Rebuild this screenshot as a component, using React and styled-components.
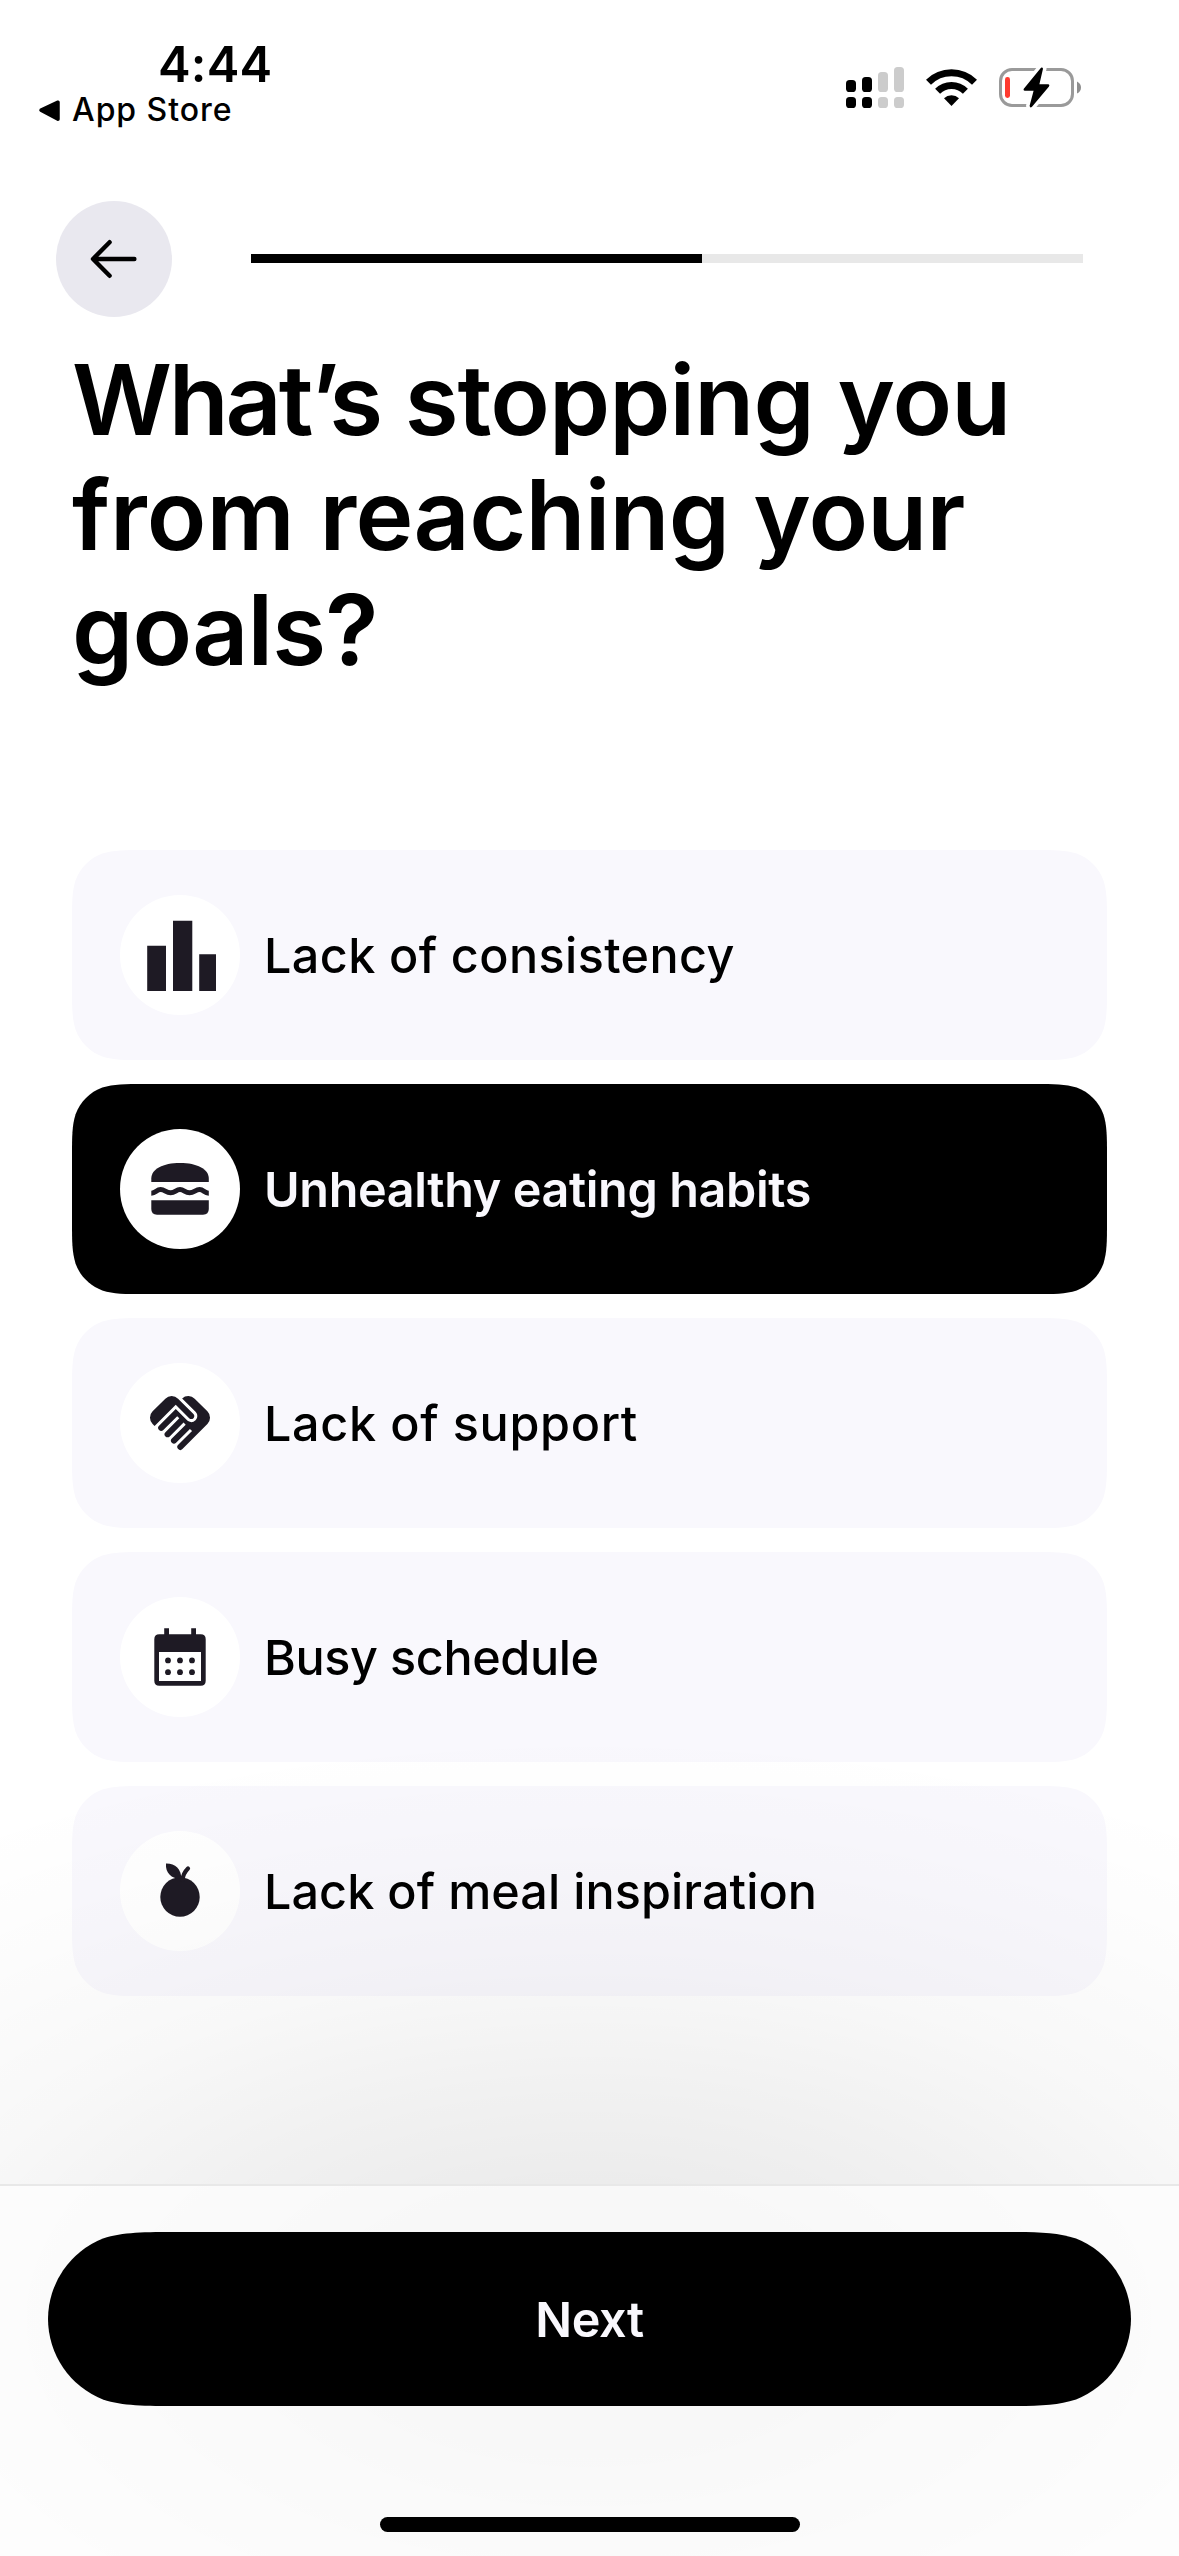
import React from "react";
import styled, { createGlobalStyle, css } from "styled-components";
import { MdHandshake } from "react-icons/md";

const INK = "#1e1a24";

const GlobalStyle = createGlobalStyle`
  *, *::before, *::after { box-sizing: border-box; }
  html, body { margin: 0; padding: 0; background: #fff; }
  body { font-family: Inter, Roboto, "Liberation Sans", sans-serif; color: #000; }
  button { font: inherit; border: 0; padding: 0; margin: 0; cursor: pointer; }
`;

/* Outline of a box whose corners ease gradually into its sides. */
const smoothBox = (w, h, r) => {
  const a = 1.528665 * r, b = 1.08849 * r, c = 0.868407 * r, d = 0.631494 * r;
  const e = 0.372824 * r, f = 0.16906 * r, g = 0.074911 * r;
  return `M${a} 0H${w - a}C${w - b} 0 ${w - c} 0 ${w - d} ${g}C${w - e} ${f} ${w - f} ${e} ${w - g} ${d}C${w} ${c} ${w} ${b} ${w} ${a}V${h - a}C${w} ${h - b} ${w} ${h - c} ${w - g} ${h - d}C${w - f} ${h - e} ${w - e} ${h - f} ${w - d} ${h - g}C${w - c} ${h} ${w - b} ${h} ${w - a} ${h}H${a}C${b} ${h} ${c} ${h} ${d} ${h - g}C${e} ${h - f} ${f} ${h - e} ${g} ${h - d}C0 ${h - c} 0 ${h - b} 0 ${h - a}V${a}C0 ${b} 0 ${c} ${g} ${d}C${f} ${e} ${e} ${f} ${d} ${g}C${c} 0 ${b} 0 ${a} 0Z`;
};

const smoothPill = (w, h) => {
  const r = h / 2;
  const a = 1.528665 * r, b = 1.08849 * r, c = 0.868407 * r, d = 0.631494 * r, g = 0.074911 * r;
  return `M${a} 0H${w - a}C${w - b} 0 ${w - c} 0 ${w - d} ${g}A${r} ${r} 0 0 1 ${w} ${r}A${r} ${r} 0 0 1 ${w - d} ${h - g}C${w - c} ${h} ${w - b} ${h} ${w - a} ${h}H${a}C${b} ${h} ${c} ${h} ${d} ${h - g}A${r} ${r} 0 0 1 0 ${r}A${r} ${r} 0 0 1 ${d} ${g}C${c} 0 ${b} 0 ${a} 0Z`;
};

const Screen = styled.div`
  width: 1179px;
  height: 2556px;
  display: flex;
  flex-direction: column;
  background: #fff;
  overflow: hidden;
`;

const StatusBar = styled.header`
  height: 201px;
  padding: 40px 98px 0 38px;
  display: flex;
  justify-content: space-between;
  align-items: flex-start;
`;

const StatusLeft = styled.div`
  display: flex;
  flex-direction: column;
  gap: 2px;
`;

const Time = styled.div`
  padding-left: 120px;
  font-size: 49px;
  line-height: 50px;
  font-weight: 600;
  letter-spacing: 0.2px;
`;

const ReturnLink = styled.div`
  display: flex;
  align-items: center;
  gap: 11px;
  font-size: 32px;
  line-height: 36px;
  font-weight: 500;
  letter-spacing: 0.95px;
  white-space: nowrap;
`;

const StatusIcons = styled.div`
  padding-top: 27px;
  display: flex;
  gap: 22px;
  svg { display: block; }
`;

const NavRow = styled.nav`
  height: 116px;
  padding: 0 96px 0 55.5px;
  display: flex;
  align-items: center;
  gap: 79.5px;
`;

const BackButton = styled.button`
  width: 116px;
  height: 116px;
  flex: none;
  border-radius: 50%;
  background: #e9e8ef;
  svg { display: block; }
`;

const Track = styled.div`
  flex: 1;
  height: 9px;
  margin-bottom: 1px;
  background: #e8e8e8;
`;

const Fill = styled.div`
  width: 451px;
  height: 100%;
  background: #000;
`;

const Title = styled.h1`
  margin: 25px 72px 0;
  font-size: 98px;
  line-height: 115px;
  font-weight: 600;
`;

const TitleLine = styled.span`
  display: block;
  white-space: nowrap;
`;

const Word = styled.span`
  letter-spacing: ${(p) => p.$track};
`;

const Options = styled.ul`
  list-style: none;
  margin: 163px 72px 0;
  padding: 0;
  display: flex;
  flex-direction: column;
  gap: 24px;
`;

const Option = styled.li`
  height: 210px;
  padding-left: 48px;
  display: flex;
  align-items: center;
  gap: 24px;
  background: #f9f8fd;
  clip-path: path("${smoothBox(1035, 210, 48)}");
  ${(p) => p.$selected && css`
    background: #000;
    color: #f9f8fd;
  `}
`;

const IconDisc = styled.span`
  width: 120px;
  height: 120px;
  flex: none;
  display: flex;
  align-items: center;
  justify-content: center;
  border-radius: 50%;
  background: #fff;
  color: ${INK};
`;

const Label = styled.span`
  font-size: 48.5px;
  font-weight: ${(p) => (p.$selected ? 600 : 500)};
  letter-spacing: ${(p) => p.$track};
  white-space: nowrap;
`;

const Dock = styled.footer`
  position: relative;
  margin-top: auto;
  height: 372px;
`;

const Glow = styled.div`
  position: absolute;
  left: 0;
  right: 0;
  top: -484px;
  bottom: 0;
  pointer-events: none;
  background: radial-gradient(
    ellipse 1125px 592px at 589px 619px,
    rgba(0, 0, 0, 0.0875) 0%,
    rgba(0, 0, 0, 0.0772) 20%,
    rgba(0, 0, 0, 0.053) 40%,
    rgba(0, 0, 0, 0.0284) 60%,
    rgba(0, 0, 0, 0.0118) 80%,
    rgba(0, 0, 0, 0) 100%
  );
`;

const DockBody = styled.div`
  position: relative;
  height: 100%;
  padding: 46px 48px 0;
  display: flex;
  flex-direction: column;
  align-items: center;
  border-top: 2px solid #e8e8e8;
  background: rgba(255, 255, 255, 0.65);
`;

const NextButton = styled.button`
  width: 1083px;
  height: 174px;
  background: #000;
  color: #f9f8fd;
  clip-path: path("${smoothPill(1083, 174)}");
`;

const HomeIndicator = styled.div`
  width: 420px;
  height: 15px;
  margin-top: 111px;
  border-radius: 8px;
  background: #000;
`;

const SignalIcon = () => (
  <svg width="58" height="41" viewBox="0 0 58 41">
    <g fill="#000">
      <rect x="0" y="13" width="10" height="12" rx="3.6" />
      <rect x="0" y="30" width="10" height="11" rx="3.6" />
      <rect x="16" y="10" width="10" height="15" rx="3.6" />
      <rect x="16" y="30" width="10" height="11" rx="3.6" />
    </g>
    <g fill="#ccc">
      <rect x="32" y="5" width="10" height="20" rx="3.6" />
      <rect x="32" y="30" width="10" height="11" rx="3.6" />
      <rect x="48" y="0" width="10" height="25" rx="3.6" />
      <rect x="48" y="30" width="10" height="11" rx="3.6" />
    </g>
  </svg>
);

const WifiIcon = () => (
  <svg width="51" height="41" viewBox="0 0 51 41">
    <g fill="none" stroke="#000" strokeWidth="7">
      <path d="M2.5 15.2A32.6 32.6 0 0 1 48.5 15.2" />
      <path d="M11.6 24.3A19.6 19.6 0 0 1 39.4 24.3" />
    </g>
    <path d="M18 31.2A10.8 10.8 0 0 1 33 31.2L25.5 39Z" />
  </svg>
);

const BatteryIcon = () => (
  <svg width="82" height="41" viewBox="0 0 82 41">
    <rect x="1.5" y="2.5" width="72" height="36" rx="11.5" fill="none" stroke="#9a9a9a" strokeWidth="3" />
    <path d="M78 14.5Q82 16.5 82 20.5T78 26.5Z" fill="#8e8e8e" />
    <rect x="6" y="10" width="5" height="21" rx="2.4" fill="#ff3b30" />
    <path
      d="M42 0.8 24.8 21.8Q24 23.6 26 23.7H34.6L30.6 38.8Q31 41.4 33 39.8L50 19.4Q51 17.3 49 17.2H40.4L44 1.8Q43.6 0 42 .8Z"
      fill="#000" stroke="#fff" strokeWidth="7" paintOrder="stroke"
    />
  </svg>
);

const ReturnIcon = () => (
  <svg width="23" height="36" viewBox="0 0 23 36">
    <path d="M3 18.2 20 10.2V27.2Z" stroke="#000" strokeWidth="3.5" strokeLinejoin="round" />
  </svg>
);

const BackIcon = () => (
  <svg width="116" height="116" viewBox="0 0 116 116" fill="none" stroke="#000" strokeWidth="4.4" strokeLinecap="round" strokeLinejoin="round">
    <path d="M78.4 58H37.2M53.6 41.2 37 58 53.6 74.8" />
  </svg>
);

const BarsIcon = () => (
  <svg width="120" height="120" viewBox="0 0 120 120" fill={INK}>
    <path d="M27.2 50.8H46V96H27.2ZM53 25.8H72.3V96H53ZM79.2 59.2H96V96H79.2Z" />
  </svg>
);

const BurgerIcon = () => (
  <svg width="120" height="120" viewBox="0 0 120 120" fill={INK}>
    <path d="M31.3 53V49.6C31.3 40 43 34 60 34S88.8 40 88.8 49.6V53Z" />
    <path
      d="M31.3 64.2C36 64.2 36.4 60.6 40.6 60.6S46 63.8 50.6 63.8 56 60.6 60 60.6 65 63.8 69.6 63.8 75.4 60.6 79.6 60.6 84 64.2 88.8 64.2"
      fill="none" stroke={INK} strokeWidth="5"
    />
    <path d="M31.3 71.3H88.8V80Q88.8 85.7 83 85.7H37Q31.3 85.7 31.3 80Z" />
  </svg>
);

const CalendarIcon = () => (
  <svg width="120" height="120" viewBox="0 0 120 120" fill={INK}>
    <path d="M44.2 31.2H49V38H44.2ZM71.2 31.2H76V38H71.2Z" />
    <path fillRule="evenodd" d="M39.3 37.3H80.7Q85.7 37.3 85.7 42.3V83.7Q85.7 88.7 80.7 88.7H39.3Q34.3 88.7 34.3 83.7V42.3Q34.3 37.3 39.3 37.3ZM39 55V84H81V55Z" />
    {[63.4, 75.2].map((y) => [48, 60, 72].map((x) => <circle key={`${x}-${y}`} cx={x} cy={y} r="2.9" />))}
  </svg>
);

const FruitIcon = () => (
  <svg width="120" height="120" viewBox="0 0 120 120" fill={INK}>
    <circle cx="60" cy="66" r="19.7" />
    <path d="M46 32.4C55 32.2 61.6 38 61.2 48C51 47.6 45.2 41.5 46 32.4Z" />
    <path d="M62.5 49C63 44 65 40.6 68 37.6" fill="none" stroke={INK} strokeWidth="4.2" strokeLinecap="round" />
  </svg>
);

const OPTIONS = [
  { label: "Lack of consistency", icon: <BarsIcon />, track: "0.4px" },
  { label: "Unhealthy eating habits", icon: <BurgerIcon />, track: "-0.36px", selected: true },
  { label: "Lack of support", icon: <MdHandshake size={72} />, track: "0.65px" },
  { label: "Busy schedule", icon: <CalendarIcon />, track: "-0.38px" },
  { label: "Lack of meal inspiration", icon: <FruitIcon />, track: "0.07px" },
];

export default function App() {
  return (
    <Screen>
      <GlobalStyle />
      <StatusBar>
        <StatusLeft>
          <Time>4:44</Time>
          <ReturnLink><ReturnIcon />App Store</ReturnLink>
        </StatusLeft>
        <StatusIcons>
          <SignalIcon />
          <WifiIcon />
          <BatteryIcon />
        </StatusIcons>
      </StatusBar>
      <NavRow>
        <BackButton aria-label="Back"><BackIcon /></BackButton>
        <Track><Fill /></Track>
      </NavRow>
      <Title>
        <TitleLine><Word $track="-3.2px">What’s</Word> <Word $track="-0.9px">stopping you</Word></TitleLine>
        <TitleLine>from <Word $track="-0.75px">reaching your</Word></TitleLine>
        <TitleLine><Word $track="-0.9px">goals?</Word></TitleLine>
      </Title>
      <Options>
        {OPTIONS.map((o) => (
          <Option key={o.label} $selected={o.selected}>
            <IconDisc>{o.icon}</IconDisc>
            <Label $selected={o.selected} $track={o.track}>{o.label}</Label>
          </Option>
        ))}
      </Options>
      <Dock>
        <Glow />
        <DockBody>
          <NextButton><Label $selected $track="-0.4px">Next</Label></NextButton>
          <HomeIndicator />
        </DockBody>
      </Dock>
    </Screen>
  );
}
